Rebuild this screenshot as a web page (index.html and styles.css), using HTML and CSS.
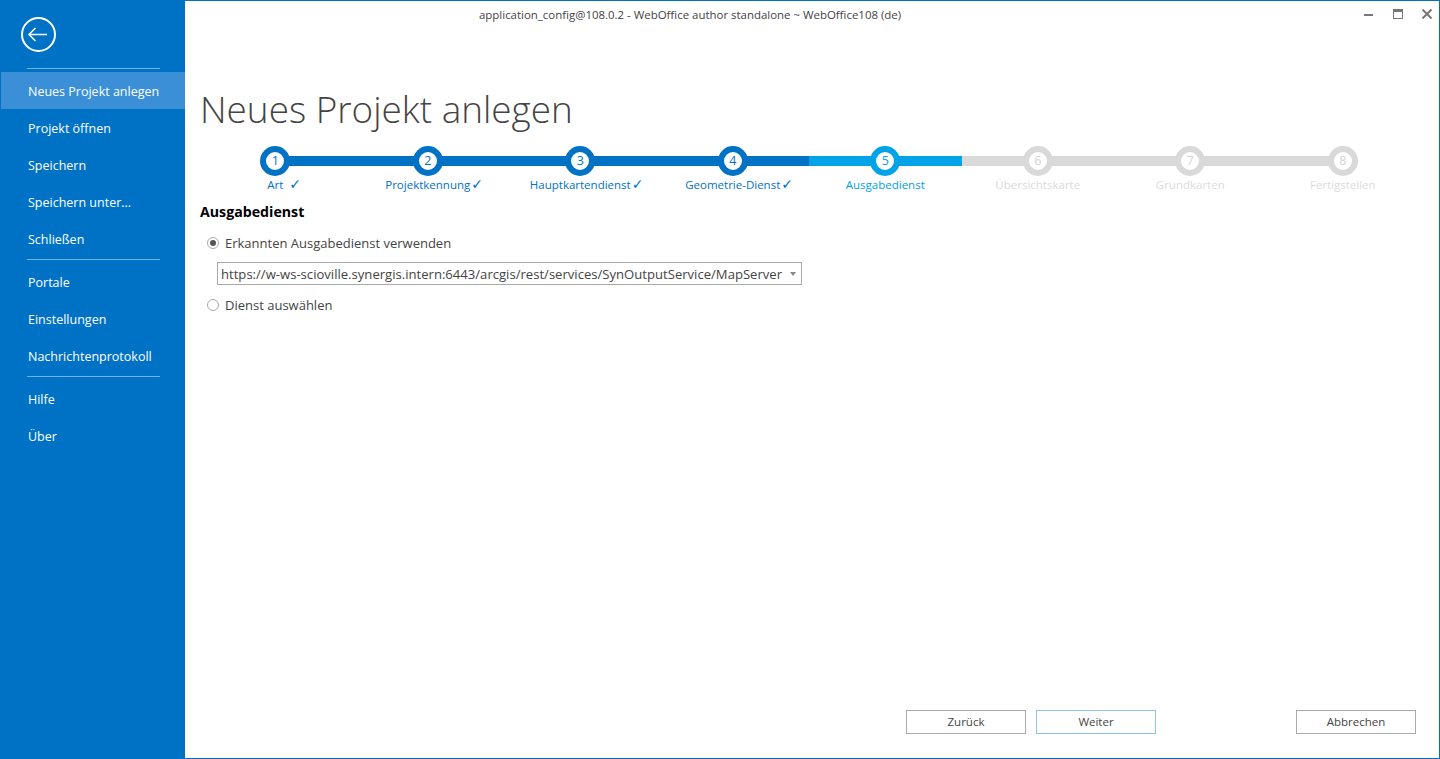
FILE: index.html
```html
<!DOCTYPE html>
<html lang="de">
<head>
    <meta charset="UTF-8">
    <title>WebOffice author standalone</title>
    <link rel="stylesheet" href="styles.css">
</head>
<body>
    <div class="window">
        <aside class="sidebar">
            <div class="back-area">
                <svg class="back-icon" width="36" height="36" viewBox="0 0 36 36" fill="none" stroke="#fff">
                    <circle cx="17.5" cy="17.5" r="16.5" stroke-width="2"/>
                    <path d="M8 17.5H26M14.5 11L8 17.5L14.5 24" stroke-width="1.5"/>
                </svg>
            </div>
            <div class="side-sep first"></div>
            <nav class="menu">
                <div class="menu-item active">Neues Projekt anlegen</div>
                <div class="menu-item">Projekt öffnen</div>
                <div class="menu-item">Speichern</div>
                <div class="menu-item">Speichern unter...</div>
                <div class="menu-item">Schließen</div>
                <div class="side-sep"></div>
                <div class="menu-item">Portale</div>
                <div class="menu-item">Einstellungen</div>
                <div class="menu-item">Nachrichtenprotokoll</div>
                <div class="side-sep"></div>
                <div class="menu-item">Hilfe</div>
                <div class="menu-item">Über</div>
            </nav>
        </aside>

        <main class="content">
            <header class="titlebar">
                <div class="window-title">application_config@108.0.2 - WebOffice author standalone ~ WebOffice108 (de)</div>
                <div class="window-controls">
                    <svg width="10" height="10" viewBox="0 0 10 10"><rect x="0" y="5" width="9" height="2" fill="#777"/></svg>
                    <svg width="10" height="10" viewBox="0 0 10 10" fill="none"><rect x="0.5" y="0.5" width="9" height="9" stroke="#777"/><rect x="0" y="0" width="10" height="3" fill="#777"/></svg>
                    <svg width="10" height="10" viewBox="0 0 10 10" fill="none"><path d="M0.5 0.5L9.5 9.5M9.5 0.5L0.5 9.5" stroke="#777" stroke-width="2"/></svg>
                </div>
            </header>

            <h1 class="page-title">Neues Projekt anlegen</h1>

            <div class="stepper">
                <div class="step done"><div class="track"><span class="dot">1</span></div><div class="step-label"><span class="step-name">Art<span class="tick wide">✓</span></span></div></div>
                <div class="step done"><div class="track"><span class="dot">2</span></div><div class="step-label"><span class="step-name">Projektkennung<span class="tick">✓</span></span></div></div>
                <div class="step done"><div class="track"><span class="dot">3</span></div><div class="step-label"><span class="step-name">Hauptkartendienst<span class="tick">✓</span></span></div></div>
                <div class="step done"><div class="track"><span class="dot">4</span></div><div class="step-label"><span class="step-name">Geometrie-Dienst<span class="tick">✓</span></span></div></div>
                <div class="step current"><div class="track"><span class="dot">5</span></div><div class="step-label">Ausgabedienst</div></div>
                <div class="step"><div class="track"><span class="dot">6</span></div><div class="step-label">Übersichtskarte</div></div>
                <div class="step"><div class="track"><span class="dot">7</span></div><div class="step-label">Grundkarten</div></div>
                <div class="step"><div class="track"><span class="dot">8</span></div><div class="step-label">Fertigstellen</div></div>
            </div>

            <section class="form">
                <h2 class="section-title">Ausgabedienst</h2>
                <div class="radio-row">
                    <span class="radio checked"></span>
                    <span>Erkannten Ausgabedienst verwenden</span>
                </div>
                <div class="select">
                    <span>https://w-ws-scioville.synergis.intern:6443/arcgis/rest/services/SynOutputService/MapServer</span>
                    <span class="caret"></span>
                </div>
                <div class="radio-row">
                    <span class="radio"></span>
                    <span>Dienst auswählen</span>
                </div>
            </section>

            <footer class="actions">
                <button class="btn">Zurück</button>
                <button class="btn focus">Weiter</button>
                <button class="btn cancel">Abbrechen</button>
            </footer>
        </main>
    </div>
</body>
</html>
```

FILE: styles.css
```css
* {
    margin: 0;
    padding: 0;
    box-sizing: border-box;
}

html, body {
    height: 100%;
    overflow: hidden;
}

body {
    font-family: 'Open Sans', 'Noto Sans', sans-serif;
    font-size: 13px;
    color: #444;
    background: white;
}

.window {
    display: flex;
    height: 759px;
    border: 1px solid #0072c6;
}

.sidebar {
    width: 184px;
    flex-shrink: 0;
    background: #0072c6;
    color: white;
}

.back-area {
    height: 67px;
    padding: 16px 0 0 20px;
}

.back-icon {
    display: block;
}

.side-sep {
    height: 1px;
    margin: 2px 25px 3px 26px;
    background: rgba(255,255,255,0.45);
}

.side-sep.first {
    margin: 0 25px 3px 26px;
}

.menu-item {
    height: 37px;
    line-height: 39px;
    padding-left: 27px;
    font-size: 12.5px;
}

.menu-item.active {
    background: #3a8fd6;
}

.content {
    flex: 1;
    position: relative;
    display: flex;
    flex-direction: column;
    min-width: 0;
}

.titlebar {
    height: 30px;
    position: relative;
}

.window-title {
    font-size: 11.45px;
    line-height: 28px;
    color: #444;
    padding-left: 294px;
}

.window-controls {
    position: absolute;
    top: 8px;
    right: 7px;
    display: flex;
    gap: 19px;
}

.page-title {
    font-weight: 300;
    font-size: 36.9px;
    line-height: 48px;
    color: #444;
    margin: 54px 0 0 15px;
}

.stepper {
    display: grid;
    grid-template-columns: repeat(8, 1fr);
    margin: 13px 20px 0 14px;
}

.track {
    position: relative;
    height: 30px;
    display: flex;
    justify-content: center;
}

.track::before {
    content: "";
    position: absolute;
    left: 0;
    right: 0;
    top: 10px;
    height: 10px;
    background: #d9d9d9;
}

.step:first-child .track::before {
    left: 50%;
}

.step:last-child .track::before {
    right: 50%;
}

.dot {
    position: relative;
    width: 30px;
    height: 30px;
    border: 6px solid #d9d9d9;
    border-radius: 50%;
    background: white;
    font-size: 12.5px;
    line-height: 18px;
    text-align: center;
    color: #d4d4d4;
}

.step-label {
    text-align: center;
    font-size: 11.5px;
    line-height: 18px;
    color: #dcdcdc;
}

.step-name {
    position: relative;
}

.tick {
    position: absolute;
    left: 100%;
    top: -2px;
    margin-left: 1px;
    font-family: 'DejaVu Sans', sans-serif;
    font-size: 14px;
    font-weight: 700;
}

.tick.wide {
    margin-left: 6px;
}

.step.done .track::before { background: #0072c6; }
.step.done .dot { border-color: #0072c6; color: #0072c6; }
.step.done .step-label { color: #0072c6; }

.step.current .track::before { background: #00a2e8; }
.step.current .dot { border-color: #00a2e8; color: #00a2e8; }
.step.current .step-label { color: #00a2e8; }

.form {
    padding-left: 15px;
    margin-top: 8px;
}

.section-title {
    font-size: 14.2px;
    font-weight: 700;
    line-height: 20px;
    color: #000;
    margin-bottom: 11px;
}

.radio-row {
    display: flex;
    align-items: center;
    gap: 6px;
    height: 20px;
    padding-left: 7px;
}

.radio {
    width: 12px;
    height: 12px;
    border: 1px solid #aaa;
    border-radius: 50%;
    background: white;
    position: relative;
}

.radio.checked::after {
    content: "";
    position: absolute;
    left: 2px;
    top: 2px;
    width: 6px;
    height: 6px;
    border-radius: 50%;
    background: #555;
}

.select {
    display: flex;
    justify-content: space-between;
    align-items: center;
    width: 585px;
    height: 23px;
    margin: 9px 0 10px 17px;
    padding: 0 5px 0 3px;
    border: 1px solid #aaa;
    font-size: 13.1px;
    white-space: nowrap;
}

.caret {
    width: 0;
    height: 0;
    border-left: 3px solid transparent;
    border-right: 3px solid transparent;
    border-top: 4px solid #888;
}

.actions {
    position: absolute;
    left: 721px;
    right: 23px;
    bottom: 24px;
    display: flex;
    gap: 10px;
}

.btn {
    width: 120px;
    height: 24px;
    padding-bottom: 2px;
    border: 1px solid #aaa;
    background: white;
    font-family: inherit;
    font-size: 11.5px;
    color: #444;
}

.btn.focus {
    border-color: #8fc3e8;
}

.btn.cancel {
    margin-left: auto;
}
```
